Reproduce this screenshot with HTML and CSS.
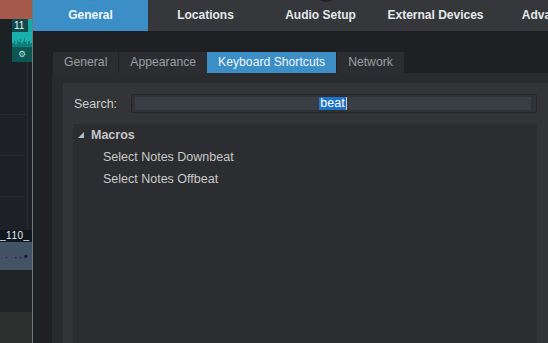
FILE: index.html
```html
<!DOCTYPE html>
<html lang="en">
<head>
    <title>Options</title>
    <link rel="stylesheet" href="styles.css">
</head>
<body>
    <div class="arrange">
        <div class="lane-head"></div>
        <div class="clip-row">
            <div class="clip-gap"></div>
            <div class="clip">
                <div class="clip-title">11<span class="clip-next"></span></div>
                <div class="clip-wave">
                    <svg width="20" height="15" viewBox="0 0 20 15">
                        <path d="M0 15 V11 H2 V9 H3 V12 H5 V8 H6 V10 H8 V7 H9 V11 H11 V9 H12 V6 H13 V10 H15 V12 H16 V9 H18 V11 H20 V15 Z" fill="#0f7f7b"/>
                    </svg>
                </div>
                <div class="clip-foot">&#9881;</div>
            </div>
        </div>
        <div class="grid-area">
            <div class="grid-line"></div>
            <div class="grid-line"></div>
            <div class="grid-line"></div>
        </div>
        <div class="event-name">_110_</div>
        <div class="event-body">&middot; &middot;&middot;&bull;</div>
        <div class="lane-dark"></div>
        <div class="lane-light"></div>
    </div>
    <div class="divider"></div>

    <div class="dialog">
        <div class="main-tabs">
            <div class="main-tab active">General<span class="tab-icon"></span></div>
            <div class="main-tab">Locations</div>
            <div class="main-tab">Audio Setup<span class="tab-icon dark"></span></div>
            <div class="main-tab">External Devices</div>
            <div class="main-tab">Advanced</div>
        </div>

        <div class="dialog-body">
            <div class="sub-tabs">
                <div class="sub-tab">General</div>
                <div class="sub-tab">Appearance</div>
                <div class="sub-tab active">Keyboard Shortcuts</div>
                <div class="sub-tab">Network</div>
            </div>
            <div class="sub-box">
                <div class="shortcut-panel">
                    <div class="search-row">
                        <label class="search-label">Search:</label>
                        <div class="search-field">
                            <div class="search-inner"><span class="selected">beat</span><span class="caret"></span></div>
                        </div>
                    </div>
                    <div class="command-list">
                        <div class="command-row folder">
                            <svg class="expander" width="6" height="6" viewBox="0 0 6 6">
                                <polygon points="6,0 6,6 0,6" fill="#b8bcc0"/>
                            </svg>
                            Macros
                        </div>
                        <div class="command-row item">Select Notes Downbeat</div>
                        <div class="command-row item">Select Notes Offbeat</div>
                    </div>
                </div>
            </div>
        </div>
    </div>
</body>
</html>
```

FILE: styles.css
```css
:root {
    --accent: #3b8ec6;
    --dialog-bg: #1f2023;
    --topbar-bg: #35373b;
    --box-bg: #2a2b2e;
    --panel-bg: #333437;
    --list-bg: #2c2d30;
}

* {
    margin: 0;
    padding: 0;
    box-sizing: border-box;
}

body {
    width: 548px;
    height: 343px;
    overflow: hidden;
    display: flex;
    font-family: 'Liberation Sans', Arial, sans-serif;
    font-size: 12px;
    background-color: var(--dialog-bg);
}

/* arrangement strip on the left */
.arrange {
    width: 32px;
    display: flex;
    flex-direction: column;
    background-color: #1d2024;
    overflow: hidden;
}

.lane-head {
    height: 19px;
    background-color: #a5594a;
}

.clip-row {
    height: 43px;
    display: flex;
}

.clip-gap {
    width: 13px;
    background-color: #1b2226;
}

.clip {
    flex: 1;
    display: flex;
    flex-direction: column;
}

.clip-title {
    height: 13px;
    display: flex;
    align-items: center;
    padding-left: 2px;
    background-color: #0f4b4e;
    color: #f2f2f2;
    font-size: 10px;
    line-height: 13px;
}

.clip-next {
    margin-left: auto;
    width: 4px;
    height: 13px;
    background-color: #1aa8a4;
}

.clip-wave {
    height: 15px;
    background-color: #19b0ab;
    display: flex;
    align-items: flex-end;
}

.clip-wave svg {
    display: block;
}

.clip-foot {
    flex: 1;
    background-color: #0c5654;
    color: #b7dcda;
    font-size: 9px;
    line-height: 15px;
    text-align: center;
}

.grid-area {
    height: 168px;
    display: flex;
    flex-direction: column;
    gap: 40px;
    padding-top: 52px;
    border-right: 1px solid #262a2e;
    margin-right: 4px;
}

.grid-line {
    height: 1px;
    background-color: #262a2f;
}

.event-name {
    height: 12px;
    background-color: #111820;
    color: #e8ecef;
    font-size: 10px;
    line-height: 12px;
    letter-spacing: 0.5px;
    white-space: nowrap;
}

.event-body {
    height: 28px;
    background-color: #425366;
    color: #18212c;
    font-size: 12px;
    line-height: 30px;
    letter-spacing: 1px;
    text-align: right;
    padding-right: 3px;
    white-space: nowrap;
}

.lane-dark {
    height: 42px;
    background-color: #212528;
}

.lane-light {
    flex: 1;
    background-color: #2b2f2d;
}

.divider {
    width: 1px;
    background-color: #6e7a7c;
}

/* dialog */
.dialog {
    flex: 1;
    display: flex;
    flex-direction: column;
    min-width: 0;
}

.main-tabs {
    height: 31px;
    display: flex;
    background-color: var(--topbar-bg);
    overflow: hidden;
}

.main-tab {
    position: relative;
    flex: 0 0 115px;
    text-align: center;
    line-height: 31px;
    font-weight: bold;
    color: #e6e8ea;
    white-space: nowrap;
}

.main-tab.active {
    background-color: var(--accent);
    color: #f4f7fa;
}

.tab-icon {
    position: absolute;
    top: -10px;
    left: 50%;
    width: 12px;
    height: 12px;
    margin-left: -5px;
    border-radius: 50%;
    background-color: #4189bb;
}

.tab-icon.dark {
    width: 16px;
    margin-left: -3px;
    background-color: #202225;
}

.dialog-body {
    flex: 1;
    display: flex;
    flex-direction: column;
    padding: 21px 0 0 19px;
    min-height: 0;
}

.sub-tabs {
    height: 21px;
    display: flex;
    padding-left: 1px;
}

.sub-tab {
    padding: 0 11px;
    line-height: 21px;
    font-size: 12.2px;
    color: #9b9ea2;
    background-color: #2c2d30;
    white-space: nowrap;
}

.sub-tab + .sub-tab {
    border-left: 1px solid #212225;
}

.sub-tab.active {
    background-color: var(--accent);
    color: #f2f5f8;
    border-left: none;
}

.sub-box {
    flex: 1;
    display: flex;
    background-color: var(--box-bg);
    padding: 10px 0 0 11px;
    min-height: 0;
}

.shortcut-panel {
    flex: 1;
    display: flex;
    flex-direction: column;
    background-color: var(--panel-bg);
    padding: 11px 0 0 10px;
}

.search-row {
    height: 19px;
    display: flex;
    align-items: center;
    margin-right: 11px;
}

.search-label {
    width: 58px;
    padding-left: 1px;
    font-size: 12.5px;
    color: #c9cbcd;
}

.search-field {
    flex: 1;
    height: 19px;
    padding: 2px 5px 2px 3px;
    border: 1px solid #25272a;
    border-radius: 2px;
    background-color: #2f3237;
}

.search-inner {
    height: 13px;
    display: flex;
    justify-content: center;
    align-items: center;
    background-color: #393d45;
    font-size: 12.5px;
    line-height: 13px;
}

.selected {
    background-color: #1f72c6;
    color: #ffffff;
    padding: 0 1px;
}

.caret {
    width: 1px;
    height: 13px;
    background-color: #c8c8c8;
}

.command-list {
    flex: 1;
    margin: 11px 11px 0 0;
    background-color: var(--list-bg);
}

.command-row {
    height: 22px;
    display: flex;
    align-items: center;
    font-size: 12.5px;
    color: #c9c9c9;
}

.command-row.folder {
    padding-left: 5px;
    font-weight: bold;
    color: #c3c6ca;
}

.expander {
    margin-right: 7px;
}

.command-row.item {
    padding-left: 30px;
}
```
